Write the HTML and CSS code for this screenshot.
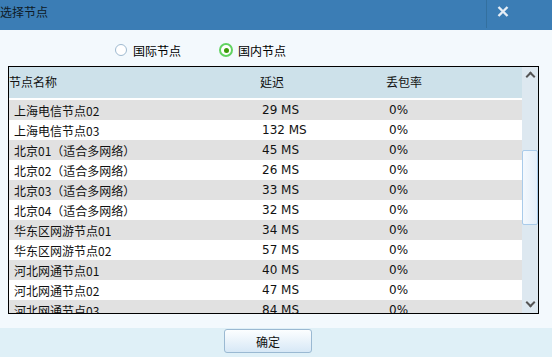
FILE: index.html
```html
<!DOCTYPE html>
<html lang="zh-CN">
<head>
    <meta charset="UTF-8">
    <title>选择节点</title>
    <link rel="stylesheet" href="styles.css">
</head>
<body>
    <div class="titlebar">
        <span class="title">选择节点</span>
        <span class="divider"></span>
        <span class="close">
            <svg width="12" height="11" viewBox="0 0 12 11"><path d="M1.5 1 L10.5 10 M10.5 1 L1.5 10" stroke="#e6eef6" stroke-width="2.4"/></svg>
        </span>
    </div>

    <div class="main">
        <div class="radio-row">
            <label class="radio"><span class="dot"></span>国际节点</label>
            <label class="radio checked"><span class="dot"></span>国内节点</label>
        </div>

        <div class="list-box">
            <div class="list">
                <div class="head">
                    <span>节点名称</span><span>延迟</span><span>丢包率</span>
                </div>
                <div id="rows"></div>
            </div>
            <div class="scrollbar">
                <span class="arrow up"></span>
                <span class="thumb"></span>
                <span class="arrow down"></span>
            </div>
        </div>
    </div>

    <div class="footer">
        <button>确定</button>
    </div>

    <script>
        // 节点数据
        const nodes = [
            ['上海电信节点02', 29], ['上海电信节点03', 132],
            ['北京01（适合多网络）', 45], ['北京02（适合多网络）', 26],
            ['北京03（适合多网络）', 33], ['北京04（适合多网络）', 32],
            ['华东区网游节点01', 34], ['华东区网游节点02', 57],
            ['河北网通节点01', 40], ['河北网通节点02', 47],
            ['河北网通节点03', 84]
        ];

        const rows = document.getElementById('rows');
        nodes.forEach(n => {
            const row = document.createElement('div');
            row.className = 'row';
            row.innerHTML = `<span>${n[0]}</span><span>${n[1]} MS</span><span>0%</span>`;
            rows.appendChild(row);
        });
    </script>
</body>
</html>
```

FILE: styles.css
```css
body {
    margin: 0;
    width: 552px;
    height: 357px;
    overflow: hidden;
    font-family: "Noto Sans CJK SC", "DejaVu Sans", sans-serif;
    font-size: 12px;
    color: #111;
    background: #f3f9fd;
}

.titlebar {
    height: 30px;
    background: #3b7db5;
    display: flex;
    position: relative;
}

.title {
    font-size: 12px;
    line-height: 24px;
    color: #0e1a26;
}

.divider {
    position: absolute;
    left: 486px;
    top: 0;
    width: 1px;
    height: 28px;
    background: #33709f;
}

.close {
    position: absolute;
    left: 497px;
    top: 3px;
}

.main {
    height: 298px;
}

.radio-row {
    height: 36px;
    display: flex;
    align-items: center;
    padding-left: 115px;
    padding-top: 4px;
    gap: 38px;
    box-sizing: border-box;
}

.radio {
    display: flex;
    align-items: center;
    font-size: 12px;
    color: #000;
}

.dot {
    width: 10px;
    height: 10px;
    border: 1px solid #9fbad0;
    border-radius: 50%;
    background: #fff;
    margin-right: 6px;
    box-sizing: content-box;
    position: relative;
}

.checked .dot {
    border: 2px solid #61d361;
    margin-right: 5px;
}

.checked .dot::after {
    content: "";
    position: absolute;
    left: 2.5px;
    top: 2.5px;
    width: 5px;
    height: 5px;
    border-radius: 50%;
    background: #3c9a0a;
}

.list-box {
    margin-left: 8px;
    width: 531px;
    height: 248px;
    border: 1px solid #000;
    box-sizing: border-box;
    display: flex;
    background: #fff;
}

.list {
    flex: 1;
    overflow: hidden;
}

.head, .row {
    display: grid;
    grid-template-columns: 251px 126px 1fr;
    align-items: center;
}

.head {
    height: 31px;
    background: #cde1ea;
    margin-bottom: 2px;
    padding-bottom: 3px;
    box-sizing: border-box;
}

.row {
    height: 20px;
    padding-left: 5px;
    grid-template-columns: 248px 127px 1fr;
    font-size: 12px;
}

.row span:not(:first-child) {
    font-family: "DejaVu Sans", sans-serif;
    font-size: 12px;
}

.row:nth-child(odd) {
    background: #e1e1e1;
}

.scrollbar {
    width: 16px;
    background: #dde8f0;
    position: relative;
}

.arrow {
    position: absolute;
    left: 5px;
    width: 5px;
    height: 5px;
    border-left: 2px solid #555;
    border-top: 2px solid #555;
}

.up {
    top: 6px;
    transform: rotate(45deg);
}

.down {
    bottom: 7px;
    transform: rotate(-135deg);
}

.thumb {
    position: absolute;
    left: 0;
    top: 83px;
    width: 16px;
    height: 75px;
    box-sizing: border-box;
    border: 1px solid #a9cbea;
    border-radius: 2px;
    background: linear-gradient(to right, #f4f9fe, #e3eef9);
}

.footer {
    height: 29px;
    background: #dff0f7;
    padding-left: 224px;
    padding-top: 1px;
    box-sizing: border-box;
}

button {
    width: 88px;
    height: 24px;
    border: 1px solid #9ab9d2;
    border-radius: 3px;
    background: linear-gradient(#fcfeff, #d7e8f6);
    font-family: "Noto Sans CJK SC", sans-serif;
    font-size: 12px;
    color: #111;
    padding: 0;
}
```
